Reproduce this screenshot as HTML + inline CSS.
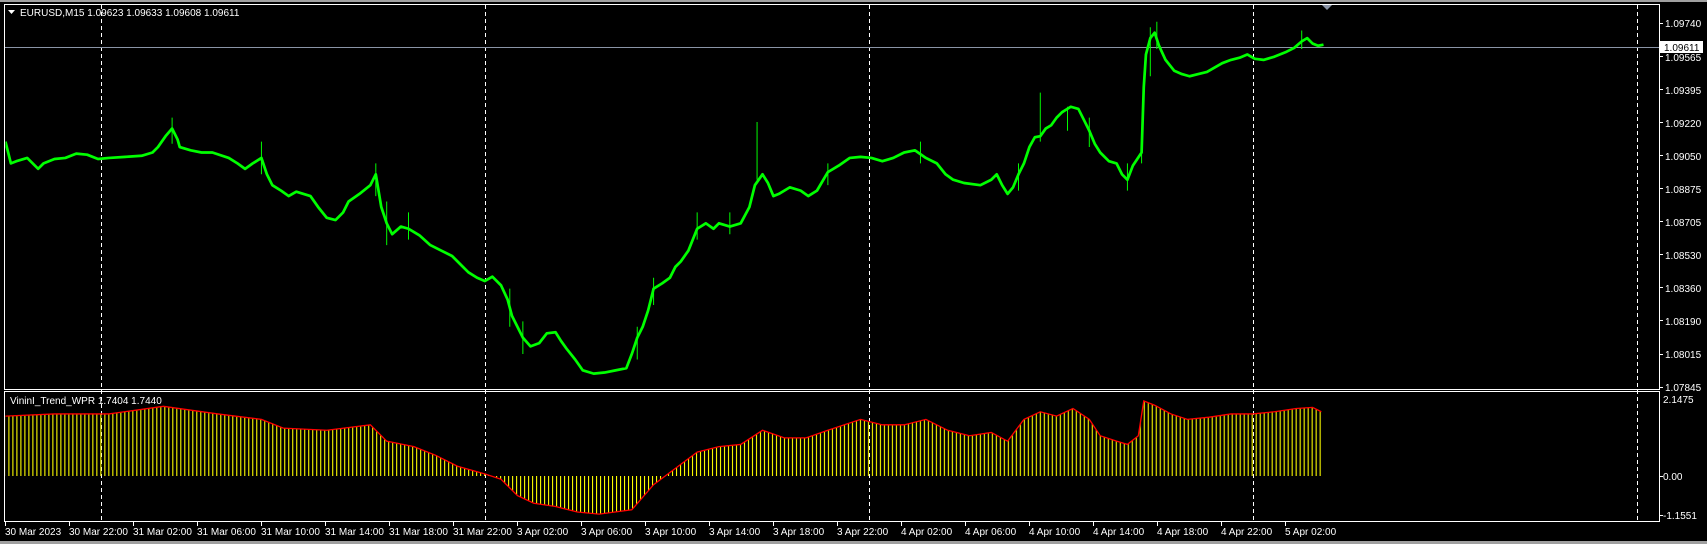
<!DOCTYPE html>
<html><head><meta charset="utf-8"><style>
html,body{margin:0;padding:0;background:#000;width:1707px;height:544px;overflow:hidden}
svg{display:block}
text{font-family:"Liberation Sans",sans-serif;font-size:10px;fill:#fff}
</style></head><body>
<svg width="1707" height="544" viewBox="0 0 1707 544">
<defs>
<pattern id="bars" patternUnits="userSpaceOnUse" width="3.67" height="10" x="4">
<rect x="0" y="0" width="1" height="10" fill="#ffff00"/>
</pattern>
<clipPath id="mainclip"><rect x="5" y="5" width="1654" height="384"/></clipPath>
</defs>
<rect x="0" y="0" width="1707" height="2" fill="#a0a0a0"/>
<rect x="0" y="541" width="1707" height="3" fill="#a0a0a0"/>
<rect x="4.5" y="4.5" width="1655" height="385" fill="none" stroke="#fff" stroke-width="1"/>
<rect x="4.5" y="391.5" width="1655" height="130" fill="none" stroke="#fff" stroke-width="1"/>
<g stroke="#fff" stroke-width="1" stroke-dasharray="4,3">
<line x1="101.5" y1="5" x2="101.5" y2="521"/>
<line x1="485.5" y1="5" x2="485.5" y2="521"/>
<line x1="869.5" y1="5" x2="869.5" y2="521"/>
<line x1="1253.5" y1="5" x2="1253.5" y2="521"/>
<line x1="1637.5" y1="5" x2="1637.5" y2="521"/>
</g>
<line x1="5" y1="47.5" x2="1659" y2="47.5" stroke="#8a94a6" stroke-width="1"/>
<polygon points="1322,5 1332,5 1327,10" fill="#8a94a6"/>
<g transform="scale(1.0893)">
<g clip-path="url(#mainclip)" fill="none" stroke="#00ff00" stroke-linejoin="round">
<polyline stroke-width="2.5" points="5,130 10,150 15,148 25,145 35,155 40,150 50,146 60,145 70,141 80,142 90,146 100,145 115,144 130,143 140,140 145,135 152,125 158,118 163,128 165,135 175,138 185,140 195,140 210,145 218,150 225,155 232,150 240,145 245,160 250,170 258,175 265,180 272,176 285,180 292,190 300,200 308,202 315,195 320,185 330,178 340,170 345,160 350,190 355,205 360,215 368,208 375,210 385,216 395,225 405,230 415,235 422,242 430,250 438,255 445,258 452,254 460,262 466,275 470,290 475,300 480,310 487,318 495,315 502,306 510,305 515,313 520,320 528,330 535,340 545,343 555,342 565,340 575,338 580,325 585,310 590,300 595,285 600,265 608,260 615,255 620,245 625,240 632,230 640,210 648,205 655,210 660,205 670,208 680,205 688,190 693,170 700,160 705,168 710,180 715,178 725,172 735,175 742,180 750,175 760,158 770,152 780,145 790,144 800,145 810,148 820,145 830,140 840,138 850,145 860,150 868,160 875,165 885,168 900,170 910,165 915,160 920,170 925,178 930,172 935,160 940,150 945,135 950,126 955,125 960,118 965,115 970,108 975,103 983,98 990,100 995,110 1000,120 1005,132 1010,140 1018,148 1025,150 1030,160 1035,165 1040,152 1048,140 1050,80 1052,50 1056,35 1060,30 1064,42 1070,55 1078,65 1085,68 1092,70 1100,68 1108,66 1115,62 1122,58 1130,55 1138,53 1145,50 1152,54 1160,55 1170,52 1180,48 1188,44 1195,38 1200,35 1205,40 1210,42 1215,41"/>
<path stroke-width="0.9" d="M158,108V132M240,130V160M345,150V180M355,185V225M375,195V220M468,265V300M480,295V325M585,300V330M600,255V280M640,195V220M670,195V215M695,112V165M760,150V170M845,130V150M935,150V175M955,85V130M980,98V120M1000,108V135M1035,150V175M1048,128V150M1056,25V70M1062,20V45M1195,28V45"/>
</g>
<polygon fill="url(#bars)" points="5,382 50,380 100,380 150,373 200,380 240,385 260,393 300,395 340,390 355,405 380,410 400,418 420,428 445,435 460,440 475,455 490,462 510,465 530,470 550,472 580,468 600,445 620,430 640,415 660,410 680,408 700,395 720,402 740,402 760,395 790,385 810,390 830,390 850,385 870,395 890,400 910,397 925,405 940,385 955,378 970,382 985,375 1000,385 1010,400 1025,405 1035,408 1045,400 1050,368 1060,372 1075,380 1090,385 1110,383 1130,380 1150,380 1170,378 1190,375 1205,374 1213,378 1213,437 5,437"/>
<polyline fill="none" stroke="#ff0000" stroke-width="1.2" points="5,382 50,380 100,380 150,373 200,380 240,385 260,393 300,395 340,390 355,405 380,410 400,418 420,428 445,435 460,440 475,455 490,462 510,465 530,470 550,472 580,468 600,445 620,430 640,415 660,410 680,408 700,395 720,402 740,402 760,395 790,385 810,390 830,390 850,385 870,395 890,400 910,397 925,405 940,385 955,378 970,382 985,375 1000,385 1010,400 1025,405 1035,408 1045,400 1050,368 1060,372 1075,380 1090,385 1110,383 1130,380 1150,380 1170,378 1190,375 1205,374 1213,378"/>
</g>
<polygon points="8,10 15,10 11.5,14" fill="#fff"/>
<text x="20" y="16">EURUSD,M15  1.09623 1.09633 1.09608 1.09611</text>
<text x="10" y="404">VininI_Trend_WPR 1.7404 1.7440</text>
<g stroke="#fff" stroke-width="1">
<line x1="1659" y1="23.5" x2="1663" y2="23.5"/><line x1="1659" y1="56.5" x2="1663" y2="56.5"/>
<line x1="1659" y1="89.5" x2="1663" y2="89.5"/><line x1="1659" y1="122.5" x2="1663" y2="122.5"/>
<line x1="1659" y1="155.5" x2="1663" y2="155.5"/><line x1="1659" y1="188.5" x2="1663" y2="188.5"/>
<line x1="1659" y1="221.5" x2="1663" y2="221.5"/><line x1="1659" y1="254.5" x2="1663" y2="254.5"/>
<line x1="1659" y1="287.5" x2="1663" y2="287.5"/><line x1="1659" y1="320.5" x2="1663" y2="320.5"/>
<line x1="1659" y1="354.5" x2="1663" y2="354.5"/><line x1="1659" y1="387.5" x2="1663" y2="387.5"/>
<line x1="1659" y1="476.5" x2="1663" y2="476.5"/><line x1="1659" y1="515.5" x2="1663" y2="515.5"/>
</g>
<g>
<text x="1665" y="27">1.09740</text>
<text x="1665" y="61">1.09565</text>
<text x="1665" y="94">1.09395</text>
<text x="1665" y="127">1.09220</text>
<text x="1665" y="160">1.09050</text>
<text x="1665" y="193">1.08875</text>
<text x="1665" y="226">1.08705</text>
<text x="1665" y="259">1.08530</text>
<text x="1665" y="292">1.08360</text>
<text x="1665" y="325">1.08190</text>
<text x="1665" y="358">1.08015</text>
<text x="1665" y="391">1.07845</text>
<text x="1663" y="403">2.1475</text>
<text x="1663" y="480">0.00</text>
<text x="1663" y="519">-1.1551</text>
</g>
<rect x="1660" y="41" width="43" height="12" fill="#fff"/>
<text x="1664" y="51" style="fill:#000">1.09611</text>
<g stroke="#fff" stroke-width="1">
<line x1="5.5" y1="521" x2="5.5" y2="526"/><line x1="69.5" y1="521" x2="69.5" y2="526"/>
<line x1="133.5" y1="521" x2="133.5" y2="526"/><line x1="197.5" y1="521" x2="197.5" y2="526"/>
<line x1="261.5" y1="521" x2="261.5" y2="526"/><line x1="325.5" y1="521" x2="325.5" y2="526"/>
<line x1="389.5" y1="521" x2="389.5" y2="526"/><line x1="453.5" y1="521" x2="453.5" y2="526"/>
<line x1="517.5" y1="521" x2="517.5" y2="526"/><line x1="581.5" y1="521" x2="581.5" y2="526"/>
<line x1="645.5" y1="521" x2="645.5" y2="526"/><line x1="709.5" y1="521" x2="709.5" y2="526"/>
<line x1="773.5" y1="521" x2="773.5" y2="526"/><line x1="837.5" y1="521" x2="837.5" y2="526"/>
<line x1="901.5" y1="521" x2="901.5" y2="526"/><line x1="965.5" y1="521" x2="965.5" y2="526"/>
<line x1="1029.5" y1="521" x2="1029.5" y2="526"/><line x1="1093.5" y1="521" x2="1093.5" y2="526"/>
<line x1="1157.5" y1="521" x2="1157.5" y2="526"/><line x1="1221.5" y1="521" x2="1221.5" y2="526"/>
<line x1="1285.5" y1="521" x2="1285.5" y2="526"/>
</g>
<g>
<text x="5" y="535">30 Mar 2023</text>
<text x="69" y="535">30 Mar 22:00</text>
<text x="133" y="535">31 Mar 02:00</text>
<text x="197" y="535">31 Mar 06:00</text>
<text x="261" y="535">31 Mar 10:00</text>
<text x="325" y="535">31 Mar 14:00</text>
<text x="389" y="535">31 Mar 18:00</text>
<text x="453" y="535">31 Mar 22:00</text>
<text x="517" y="535">3 Apr 02:00</text>
<text x="581" y="535">3 Apr 06:00</text>
<text x="645" y="535">3 Apr 10:00</text>
<text x="709" y="535">3 Apr 14:00</text>
<text x="773" y="535">3 Apr 18:00</text>
<text x="837" y="535">3 Apr 22:00</text>
<text x="901" y="535">4 Apr 02:00</text>
<text x="965" y="535">4 Apr 06:00</text>
<text x="1029" y="535">4 Apr 10:00</text>
<text x="1093" y="535">4 Apr 14:00</text>
<text x="1157" y="535">4 Apr 18:00</text>
<text x="1221" y="535">4 Apr 22:00</text>
<text x="1285" y="535">5 Apr 02:00</text>
</g>
</svg>
</body></html>
